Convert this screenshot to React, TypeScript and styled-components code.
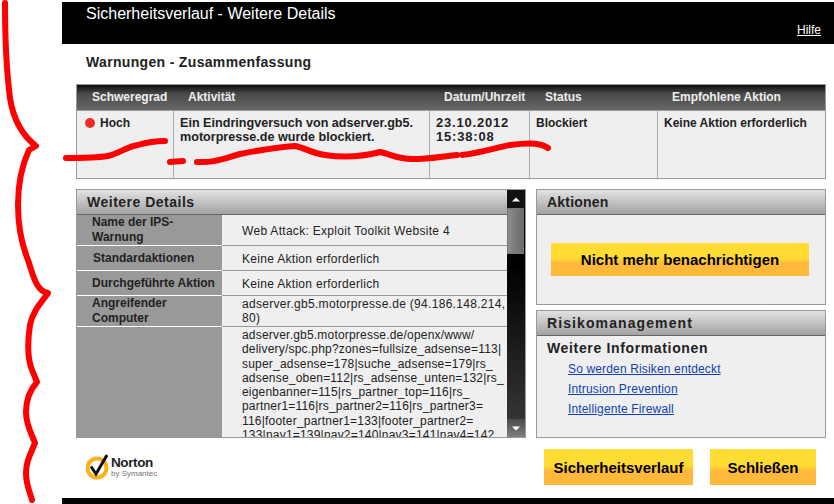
import React from "react";
import styled, { createGlobalStyle } from "styled-components";

const GlobalStyle = createGlobalStyle`
  html, body {
    margin: 0;
    padding: 0;
    background: #fff;
    overflow: hidden;
  }
  body {
    font-family: "Liberation Sans", Arial, sans-serif;
    font-size: 12px;
    color: #222;
  }
  * {
    box-sizing: border-box;
  }
`;

const Page = styled.div`
  position: relative;
  width: 834px;
  height: 504px;
  padding: 2px 0 0 62px;
  overflow: hidden;
`;

const Window = styled.div`
  width: 772px;
  height: 502px;
  display: flex;
  flex-direction: column;
`;

const TitleBar = styled.header`
  height: 42px;
  background: #000;
  color: #fff;
  display: flex;
  justify-content: space-between;
  padding: 3px 13px 0 24px;
`;

const TitleText = styled.h1`
  margin: 0;
  font-size: 16px;
  line-height: 18px;
  font-weight: 400;
`;

const HelpLink = styled.a`
  align-self: flex-end;
  margin-bottom: 7px;
  font-size: 12px;
  line-height: 14px;
  color: #fff;
  text-decoration: underline;
`;

const Content = styled.main`
  flex: 1;
  display: flex;
  flex-direction: column;
  padding: 0 8px 0 14px;
`;

const SectionTitle = styled.h2`
  margin: 0;
  height: 40px;
  padding: 10px 0 0 10px;
  font-size: 14px;
  line-height: 16px;
  font-weight: 700;
  letter-spacing: 0.33px;
  color: #222;
`;

const SummaryTable = styled.section`
  height: 95px;
  border: 1px solid #999;
  background: #efefef;
  display: flex;
  flex-direction: column;
`;

const SummaryHead = styled.div`
  height: 25px;
  display: grid;
  grid-template-columns: 96px 256px 100px 128px 1fr;
  background: linear-gradient(#0c0c0c 0%, #4a4a4a 35%, #666 100%);
  color: #eee;
  font-size: 12px;
  line-height: 25px;
  font-weight: 700;
`;

const HeadCell = styled.div<{ $indent: number }>`
  padding-left: ${(p) => p.$indent}px;
  white-space: nowrap;
`;

const SummaryBody = styled.div`
  flex: 1;
  display: grid;
  grid-template-columns: 96px 256px 100px 128px 1fr;
  border-top: 1px solid #999;
  font-weight: 700;
  font-size: 12px;
  line-height: 14px;
`;

const BodyCell = styled.div<{ $size?: number; $spacing?: number }>`
  padding: 5px 6px 0 6px;
  border-left: 1px solid #a8adb5;
  white-space: nowrap;
  font-size: ${(p) => p.$size ?? 12}px;
  letter-spacing: ${(p) => p.$spacing ?? 0}px;
  &:first-child {
    border-left: 0;
    padding-left: 8px;
    display: flex;
    align-items: flex-start;
    gap: 5px;
  }
`;

const SeverityDot = styled.span`
  width: 10px;
  height: 10px;
  margin-top: 2px;
  border-radius: 50%;
  background: #ee2b2b;
`;

const Columns = styled.div`
  margin-top: 10px;
  display: flex;
  gap: 10px;
  height: 249px;
`;

const Panel = styled.section<{ $height?: number }>`
  border: 1px solid #999;
  background: #efefef;
  ${(p) => (p.$height ? `height: ${p.$height}px;` : "")}
  display: flex;
  flex-direction: column;
  overflow: hidden;
`;

const PanelHeader = styled.div<{ $spacing?: number }>`
  height: 25px;
  flex: none;
  padding-left: 10px;
  border-bottom: 1px solid #666;
  background: linear-gradient(#e2e2e2, #a2a2a2);
  font-size: 14px;
  line-height: 24px;
  font-weight: 700;
  letter-spacing: ${(p) => p.$spacing ?? 0.2}px;
  color: #222;
`;

const DetailsPanel = styled(Panel)`
  width: 450px;
  position: relative;
  flex: none;
`;

const DetailsLayout = styled.div`
  flex: 1;
  display: flex;
  min-height: 0;
  margin-right: 18px;
`;

const DetailRows = styled.div`
  flex: 1;
  height: 223px;
  overflow: hidden;
  display: flex;
  flex-direction: column;
  background: #999;
`;

const DetailRow = styled.div<{ $height: number }>`
  flex: none;
  height: ${(p) => p.$height}px;
  display: grid;
  grid-template-columns: 145px 285px;
  grid-template-rows: minmax(0, 1fr);
`;

const DetailLabel = styled.div<{ $tall?: boolean; $indent?: number }>`
  padding: ${(p) => (p.$tall ? "0" : "5px")} 0 0 ${(p) => p.$indent ?? 15}px;
  background: #999;
  border-bottom: 1px solid #fff;
  font-weight: 700;
  line-height: 15px;
  white-space: nowrap;
  color: #222;
`;

const DetailValue = styled.div<{ $pad: number }>`
  padding: ${(p) => p.$pad}px 0 0 20px;
  background: #efefef;
  border-bottom: 1px solid #999;
  line-height: 14px;
  letter-spacing: 0.3px;
  color: #222;
`;

const LongValue = styled(DetailValue)`
  line-height: 14.25px;
  letter-spacing: 0.2px;
  white-space: nowrap;
  overflow: hidden;
`;

const Scrollbar = styled.div`
  position: absolute;
  top: 0;
  right: 0;
  bottom: 0;
  width: 18px;
  display: flex;
  flex-direction: column;
  background: linear-gradient(#000 30%, #3a3a3a);
`;

const ScrollButton = styled.div<{ $light?: boolean }>`
  height: 18px;
  flex: none;
  display: flex;
  align-items: center;
  justify-content: center;
  background: ${(p) => (p.$light ? "linear-gradient(#4a4a4a, #808080)" : "#111")};
`;

const ScrollThumb = styled.div`
  height: 46px;
  flex: none;
  margin: 0 1px 0 0;
  border: 1px solid #777;
  background: linear-gradient(90deg, #8c8c8c, #6a6a6a);
`;

const ScrollSpacer = styled.div`
  flex: 1;
`;

const Side = styled.div`
  flex: 1;
  display: flex;
  flex-direction: column;
  gap: 5px;
`;

const ActionBody = styled.div`
  flex: 1;
  padding: 28px 16px 0 14px;
`;

const YellowButton = styled.button<{ $width: number; $height: number }>`
  display: block;
  width: ${(p) => p.$width}px;
  height: ${(p) => p.$height}px;
  padding: 0;
  border: 0;
  background: linear-gradient(#ffdc33 0%, #ffdc33 45%, #ffb93a 62%, #ffb93a 100%);
  color: #000;
  font-family: inherit;
  font-size: 15px;
  font-weight: 700;
  white-space: nowrap;
`;

const InfoBody = styled.div`
  padding: 4px 10px;
`;

const InfoTitle = styled.h3`
  margin: 0 0 3px;
  font-size: 14px;
  line-height: 16px;
  font-weight: 700;
  letter-spacing: 0.65px;
  color: #222;
`;

const InfoLink = styled.a`
  display: block;
  margin-left: 21px;
  font-size: 12px;
  line-height: 20px;
  letter-spacing: 0.15px;
  color: #1240b4;
  text-decoration: underline;
`;

const Footer = styled.footer`
  flex: 1;
  display: flex;
  align-items: flex-start;
  padding: 11px 10px 0 10px;
`;

const Logo = styled.div`
  display: flex;
  align-items: center;
  margin-top: 4px;
  color: #222;
`;

const LogoWords = styled.div`
  display: flex;
  flex-direction: column;
`;

const LogoName = styled.span`
  font-size: 13.5px;
  line-height: 13px;
  font-weight: 700;
  letter-spacing: -0.4px;
`;

const LogoSub = styled.span`
  font-size: 8px;
  line-height: 9px;
  color: #777;
`;

const FooterButtons = styled.div`
  margin-left: auto;
  display: flex;
  gap: 17px;
`;

const BottomBar = styled.div`
  height: 6px;
  flex: none;
  background: #000;
`;

const Scribbles = styled.svg`
  position: absolute;
  inset: 0;
  pointer-events: none;
`;

const Stroke = styled.path`
  fill: none;
  stroke: #ff0000;
  stroke-width: 6;
  stroke-linecap: round;
  stroke-linejoin: round;
`;

const App = () => {
  return (
    <Page>
      <GlobalStyle />
      <Window>
        <TitleBar>
          <TitleText>Sicherheitsverlauf - Weitere Details</TitleText>
          <HelpLink href="#">Hilfe</HelpLink>
        </TitleBar>
        <Content>
          <SectionTitle>Warnungen - Zusammenfassung</SectionTitle>
          <SummaryTable>
            <SummaryHead>
              <HeadCell $indent={15}>Schweregrad</HeadCell>
              <HeadCell $indent={15}>Aktivität</HeadCell>
              <HeadCell $indent={15}>Datum/Uhrzeit</HeadCell>
              <HeadCell $indent={16}>Status</HeadCell>
              <HeadCell $indent={15}>Empfohlene Aktion</HeadCell>
            </SummaryHead>
            <SummaryBody>
              <BodyCell>
                <SeverityDot />
                Hoch
              </BodyCell>
              <BodyCell $size={12.6}>
                Ein Eindringversuch von adserver.gb5.
                <br />
                motorpresse.de wurde blockiert.
              </BodyCell>
              <BodyCell $size={13} $spacing={0.8}>
                23.10.2012
                <br />
                15:38:08
              </BodyCell>
              <BodyCell>Blockiert</BodyCell>
              <BodyCell>Keine Aktion erforderlich</BodyCell>
            </SummaryBody>
          </SummaryTable>
          <Columns>
            <DetailsPanel>
              <PanelHeader $spacing={0.5}>Weitere Details</PanelHeader>
              <DetailsLayout>
                <DetailRows>
                  <DetailRow $height={31}>
                    <DetailLabel $tall>
                      Name der IPS-
                      <br />
                      Warnung
                    </DetailLabel>
                    <DetailValue $pad={9}>Web Attack: Exploit Toolkit Website 4</DetailValue>
                  </DetailRow>
                  <DetailRow $height={25}>
                    <DetailLabel $indent={16}>Standardaktionen</DetailLabel>
                    <DetailValue $pad={6}>Keine Aktion erforderlich</DetailValue>
                  </DetailRow>
                  <DetailRow $height={25}>
                    <DetailLabel>Durchgeführte Aktion</DetailLabel>
                    <DetailValue $pad={6}>Keine Aktion erforderlich</DetailValue>
                  </DetailRow>
                  <DetailRow $height={31}>
                    <DetailLabel $tall>
                      Angreifender
                      <br />
                      Computer
                    </DetailLabel>
                    <DetailValue $pad={1}>adserver.gb5.motorpresse.de (94.186.148.214, 80)</DetailValue>
                  </DetailRow>
                  <DetailRow $height={120}>
                    <DetailLabel />
                    <LongValue $pad={1}>
                      adserver.gb5.motorpresse.de/openx/www/
                      <br />
                      delivery/spc.php?zones=fullsize_adsense=113|
                      <br />
                      super_adsense=178|suche_adsense=179|rs_
                      <br />
                      adsense_oben=112|rs_adsense_unten=132|rs_
                      <br />
                      eigenbanner=115|rs_partner_top=116|rs_
                      <br />
                      partner1=116|rs_partner2=116|rs_partner3=
                      <br />
                      116|footer_partner1=133|footer_partner2=
                      <br />
                      133|nav1=139|nav2=140|nav3=141|nav4=142
                    </LongValue>
                  </DetailRow>
                </DetailRows>
              </DetailsLayout>
              <Scrollbar>
                <ScrollButton>
                  <svg width="8" height="5" viewBox="0 0 8 5">
                    <path d="M4 0.5 L8 4.5 H0 Z" fill="#fff" />
                  </svg>
                </ScrollButton>
                <ScrollThumb />
                <ScrollSpacer />
                <ScrollButton $light>
                  <svg width="8" height="5" viewBox="0 0 8 5">
                    <path d="M0 0.5 H8 L4 4.5 Z" fill="#fff" />
                  </svg>
                </ScrollButton>
              </Scrollbar>
            </DetailsPanel>
            <Side>
              <Panel $height={116}>
                <PanelHeader>Aktionen</PanelHeader>
                <ActionBody>
                  <YellowButton $width={258} $height={33}>
                    Nicht mehr benachrichtigen
                  </YellowButton>
                </ActionBody>
              </Panel>
              <Panel $height={128}>
                <PanelHeader $spacing={1.1}>Risikomanagement</PanelHeader>
                <InfoBody>
                  <InfoTitle>Weitere Informationen</InfoTitle>
                  <InfoLink href="#">So werden Risiken entdeckt</InfoLink>
                  <InfoLink href="#">Intrusion Prevention</InfoLink>
                  <InfoLink href="#">Intelligente Firewall</InfoLink>
                </InfoBody>
              </Panel>
            </Side>
          </Columns>
          <Footer>
            <Logo>
              <svg width="25" height="28" viewBox="0 0 25 28">
                <circle cx="11" cy="15" r="9.5" fill="none" stroke="#f9b21a" strokeWidth="4" />
                <path d="M5 13.5 L10 21 L21 2" fill="none" stroke="#111" strokeWidth="3" strokeLinejoin="miter" />
              </svg>
              <LogoWords>
                <LogoName>Norton</LogoName>
                <LogoSub>by Symantec</LogoSub>
              </LogoWords>
            </Logo>
            <FooterButtons>
              <YellowButton $width={149} $height={36}>
                Sicherheitsverlauf
              </YellowButton>
              <YellowButton $width={106} $height={36}>
                Schließen
              </YellowButton>
            </FooterButtons>
          </Footer>
        </Content>
        <BottomBar />
      </Window>
      <Scribbles width="834" height="504" viewBox="0 0 834 504">
        <Stroke d="M5 3 C5 40 7 75 10 98 C13 118 22 135 36 146 L29 150 C22 165 18 185 18 205 C18 225 22 245 28 260 C33 275 36 291 48 293 C42 302 33 310 30 325 C27 345 28 360 32 370 L37 382 C30 390 26 400 26 412 C26 425 32 435 35 443 C30 455 26 462 26 473 C26 485 30 492 32 500" />
        <Stroke d="M66 158 C80 158 95 158 108 156 C120 153 126 147 138 145 C148 142 155 141 165 141" />
        <Stroke d="M170 162 L183 161" />
        <Stroke d="M197 162 C215 163 225 158 240 154 C255 151 280 147 295 146 C305 148 312 153 325 155 C345 158 365 156 380 152 C390 154 398 159 412 159 C430 159 445 156 457 155" />
        <Stroke d="M462 155 C480 153 495 148 510 145 C525 143 540 142 548 148" />
      </Scribbles>
    </Page>
  );
};

export default App;
